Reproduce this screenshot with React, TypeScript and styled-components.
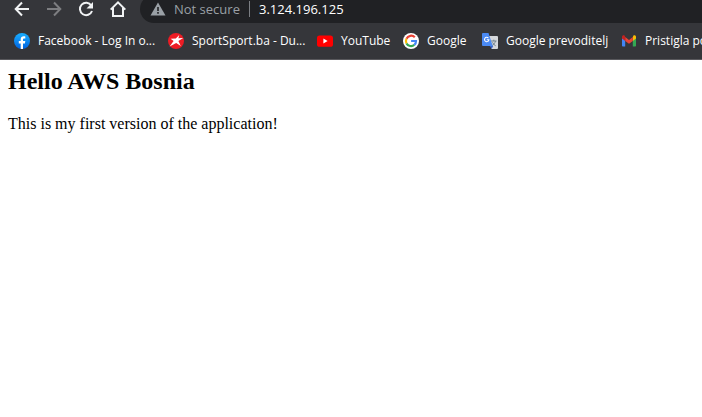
import React from "react";
import styled, { createGlobalStyle } from "styled-components";

const GlobalStyle = createGlobalStyle`
  * { box-sizing: border-box; }
  body { margin: 0; background: #fff; }
`;

const uiFont = `"Segoe UI", "Open Sans", "Noto Sans", sans-serif`;

const Browser = styled.div`
  display: flex;
  flex-direction: column;
  overflow: hidden;
`;

const Toolbar = styled.div`
  display: flex;
  height: 23px;
  padding-left: 6px;
  background: #35363a;
`;

const NavButton = styled.button`
  display: flex;
  align-items: center;
  justify-content: center;
  flex: none;
  width: 32px;
  height: 28px;
  margin: -5px 0 0;
  padding: 0;
  border: 0;
  background: none;
  color: #f1f3f4;

  &:disabled { color: #7d7e81; }
`;

const AddressBar = styled.div`
  display: flex;
  align-items: center;
  flex: 1;
  height: 28px;
  margin: -5px 0 0 6px;
  padding-left: 10px;
  border-radius: 14px 0 0 14px;
  background: #202124;
`;

const SecurityButton = styled.button`
  display: flex;
  align-items: center;
  gap: 8px;
  flex: none;
  width: 100px;
  height: 16px;
  padding: 0;
  border: 0;
  border-right: 1px solid #7b7e83;
  background: none;
  color: #9aa0a6;
  font: 13px/20px ${uiFont};
  white-space: nowrap;
`;

const AddressInput = styled.input`
  flex: 1;
  min-width: 0;
  padding: 0 0 0 9px;
  border: 0;
  outline: 0;
  background: none;
  color: #fff;
  font: 13px/20px ${uiFont};
`;

const Bookmarks = styled.nav`
  display: flex;
  align-items: center;
  gap: 16px;
  height: 37px;
  padding-left: 14px;
  overflow: hidden;
  border-bottom: 1px solid #59595d;
  background: #35363a;
`;

const Bookmark = styled.a<{ $label: number }>`
  display: grid;
  grid-template-columns: 16px ${(p) => p.$label}px;
  align-items: center;
  gap: 8px;
  flex: none;
  color: #fff;
  font: 12px/16px ${uiFont};
  text-decoration: none;
  white-space: nowrap;

  svg { display: block; }
`;

const Page = styled.main`
  padding: 8px;
  color: #000;
  font: 16px/18px "Liberation Serif", "Times New Roman", serif;
`;

const Title = styled.h2`
  margin: 0 0 20px;
  font-size: 24px;
  line-height: 27px;
`;

const Text = styled.p`
  margin: 0;
`;

const BackIcon = () => (
  <svg width="16" height="16" viewBox="0 0 16 16" fill="none" stroke="currentColor" strokeWidth="2">
    <path d="M15 8H2M8 1.5 1.7 8 8 14.5" />
  </svg>
);

const ForwardIcon = () => (
  <svg width="16" height="16" viewBox="0 0 16 16" fill="none" stroke="currentColor" strokeWidth="2">
    <path d="M1 8h13M8 1.5 14.3 8 8 14.5" />
  </svg>
);

const ReloadIcon = () => (
  <svg width="16" height="16" viewBox="0 0 16 16">
    <path d="M13.3 4.5A6.2 6.2 0 1 0 14 10" fill="none" stroke="currentColor" strokeWidth="2" />
    <path d="M15 1v6.5H8.5z" fill="currentColor" />
  </svg>
);

const HomeIcon = () => (
  <svg width="18" height="18" viewBox="0 0 18 18" fill="none" stroke="currentColor" strokeWidth="2">
    <path d="M1.7 9.6 9 2.4l7.3 7.2M4 8v8h10V8" />
  </svg>
);

const WarningIcon = () => (
  <svg width="16" height="16" viewBox="0 0 16 16">
    <path d="M8 1.5 15.5 14.5H.5z" fill="#9aa0a6" />
    <path d="M7.2 6h1.6v4H7.2zM7.2 11h1.6v1.7H7.2z" fill="#202124" />
  </svg>
);

const FacebookIcon = () => (
  <svg width="16" height="16" viewBox="0 0 16 16">
    <defs>
      <linearGradient id="fb" x1="0" y1="0" x2="0" y2="1">
        <stop stopColor="#19afff" />
        <stop offset="1" stopColor="#0062e0" />
      </linearGradient>
    </defs>
    <circle cx="8" cy="8" r="8" fill="url(#fb)" />
    <path d="M6.7 16v-5.6H4.8V8h1.9V6.5c0-2.2 1.1-3.3 3.1-3.3.7 0 1.2.1 1.5.2v2h-1.1c-.9 0-1.2.4-1.2 1.2V8h2.3l-.4 2.4H9V16z" fill="#fff" />
  </svg>
);

const SportIcon = () => (
  <svg width="16" height="16" viewBox="0 0 16 16">
    <circle cx="8" cy="8" r="8" fill="#ed1c24" />
    <path d="M11.2 2 10.4 5.3l4.8-.2-4.8 3 2.4 4.8-4.6-3L1.6 13.6 5.6 8 2.6 5.8l5.2-.3z" fill="#fff" />
  </svg>
);

const YouTubeIcon = () => (
  <svg width="16" height="16" viewBox="0 0 16 16">
    <rect y="2.4" width="16" height="11.4" rx="2.6" fill="#f00" />
    <path d="m6.4 5.6 4.2 2.5-4.2 2.4z" fill="#fff" />
  </svg>
);

const GoogleIcon = () => (
  <svg width="16" height="16" viewBox="0 0 16 16">
    <circle cx="8" cy="8" r="8" fill="#fff" />
    <g fill="none" strokeWidth="2.2">
      <path d="M11.8 4.3A5.1 5.1 0 0 0 3.5 5.7" stroke="#ea4335" />
      <path d="M3.5 5.7a5.1 5.1 0 0 0 0 4.7" stroke="#fbbc05" />
      <path d="M3.5 10.4a5.1 5.1 0 0 0 7.8 1.5" stroke="#34a853" />
      <path d="M11.3 11.9A5 5 0 0 0 13 8H8.1" stroke="#4285f4" />
    </g>
  </svg>
);

const TranslateIcon = () => (
  <svg width="16" height="16" viewBox="0 0 16 16">
    <path d="M6 3h9a1 1 0 0 1 1 1v11a1 1 0 0 1-1 1H9.5z" fill="#d5d8dc" />
    <path d="M9 8h5.5M11.8 6.7V8M13.5 8c-.5 2-2 3.8-3.5 4.7M10.5 9.3c.6 1.5 1.7 2.7 3.2 3.5" fill="none" stroke="#71828d" />
    <path d="m8 13 3.2 0L9.6 16z" fill="#3a63c8" />
    <path d="M1 0h5.5l4.2 13H1a1 1 0 0 1-1-1V1a1 1 0 0 1 1-1z" fill="#4a8af4" />
    <path d="M6.4 5.1a2.2 2.2 0 1 0 .5 1.6H4.8" fill="none" stroke="#fff" strokeWidth="1.1" />
  </svg>
);

const GmailIcon = () => (
  <svg width="16" height="16" viewBox="0 0 16 16">
    <path d="M1 4.5v8.3a.8.8 0 0 0 .8.8h2.4V7z" fill="#4285f4" />
    <path d="M15 4.5v8.3a.8.8 0 0 1-.8.8h-2.4V7z" fill="#34a853" />
    <path d="M11.8 4v4L15 5.4V4c0-1.5-1.6-2.1-2.7-1.3z" fill="#fbbc04" />
    <path d="M4.2 8V4L8 6.9 11.8 4v4L8 10.8z" fill="#ea4335" />
    <path d="M1 4v1.4L4.2 8V4l-.5-1.3C2.6 1.9 1 2.5 1 4z" fill="#c5221f" />
  </svg>
);

const bookmarks = [
  { label: "Facebook - Log In o...", width: 114, Icon: FacebookIcon },
  { label: "SportSport.ba - Du...", width: 109, Icon: SportIcon },
  { label: "YouTube", width: 46, Icon: YouTubeIcon },
  { label: "Google", width: 39, Icon: GoogleIcon },
  { label: "Google prevoditelj", width: 99, Icon: TranslateIcon },
  { label: "Pristigla pošta", width: 90, Icon: GmailIcon },
];

export default function App() {
  return (
    <Browser>
      <GlobalStyle />
      <Toolbar>
        <NavButton aria-label="Back"><BackIcon /></NavButton>
        <NavButton aria-label="Forward" disabled><ForwardIcon /></NavButton>
        <NavButton aria-label="Reload"><ReloadIcon /></NavButton>
        <NavButton aria-label="Home"><HomeIcon /></NavButton>
        <AddressBar>
          <SecurityButton><WarningIcon />Not secure</SecurityButton>
          <AddressInput aria-label="Address" defaultValue="3.124.196.125" />
        </AddressBar>
      </Toolbar>
      <Bookmarks aria-label="Bookmarks">
        {bookmarks.map(({ label, width, Icon }) => (
          <Bookmark key={label} href="#" $label={width}>
            <Icon />
            <span>{label}</span>
          </Bookmark>
        ))}
      </Bookmarks>
      <Page>
        <Title>Hello AWS Bosnia</Title>
        <Text>This is my first version of the application!</Text>
      </Page>
    </Browser>
  );
}
